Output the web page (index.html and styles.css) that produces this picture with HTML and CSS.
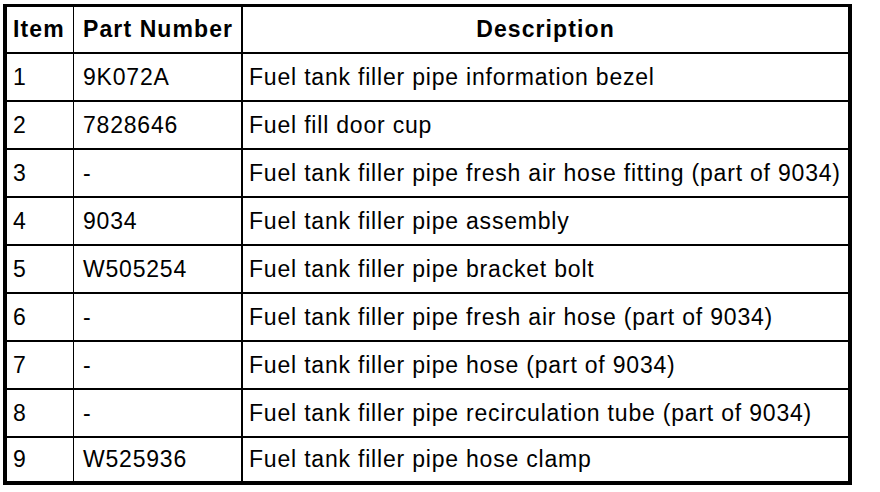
FILE: index.html
```html
<!DOCTYPE html>
<html>
<head>
<meta charset="utf-8">
<link rel="stylesheet" href="styles.css">
</head>
<body>
<table class="parts">
  <colgroup>
    <col class="c-item">
    <col class="c-part">
    <col class="c-desc">
  </colgroup>
  <thead>
    <tr><th class="item">Item</th><th class="part">Part Number</th><th class="desc">Description</th></tr>
  </thead>
  <tbody>
    <tr><td class="item">1</td><td class="part">9K072A</td><td class="desc">Fuel tank filler pipe information bezel</td></tr>
    <tr><td class="item">2</td><td class="part">7828646</td><td class="desc">Fuel fill door cup</td></tr>
    <tr><td class="item">3</td><td class="part">-</td><td class="desc">Fuel tank filler pipe fresh air hose fitting (part of 9034)</td></tr>
    <tr><td class="item">4</td><td class="part">9034</td><td class="desc">Fuel tank filler pipe assembly</td></tr>
    <tr><td class="item">5</td><td class="part">W505254</td><td class="desc">Fuel tank filler pipe bracket bolt</td></tr>
    <tr><td class="item">6</td><td class="part">-</td><td class="desc">Fuel tank filler pipe fresh air hose (part of 9034)</td></tr>
    <tr><td class="item">7</td><td class="part">-</td><td class="desc">Fuel tank filler pipe hose (part of 9034)</td></tr>
    <tr><td class="item">8</td><td class="part">-</td><td class="desc">Fuel tank filler pipe recirculation tube (part of 9034)</td></tr>
    <tr><td class="item">9</td><td class="part">W525936</td><td class="desc">Fuel tank filler pipe hose clamp</td></tr>
  </tbody>
</table>
</body>
</html>
```
FILE: styles.css
```css
html, body {
  margin: 0;
  padding: 0;
  background: #fff;
}
body {
  padding: 4px 0 0 3px;
  font-family: "Liberation Sans", Arial, sans-serif;
  font-size: 23px;
  color: #000;
}
.parts {
  border-collapse: separate;
  border-spacing: 0;
  table-layout: fixed;
  width: 849px;
  border: 4px solid #000;
  border-top-width: 3px;
}
.c-item { width: 67px; }
.c-part { width: 169px; }
.c-desc { width: 605px; }
.parts th,
.parts td {
  height: 48px;
  padding: 0 0 0 6px;
  border: 0 solid #000;
  border-bottom-width: 2px;
  border-right-width: 2px;
  text-align: left;
  vertical-align: middle;
  white-space: nowrap;
  letter-spacing: 0.8px;
  box-sizing: border-box;
}
.parts th {
  height: 47px;
  font-weight: bold;
  letter-spacing: 1.1px;
}
.parts tbody tr:last-child td {
  border-bottom-width: 0;
  height: 43px;
}
.parts .item {
  border-right-width: 1px;
  padding-left: 6px;
}
.parts .part {
  padding-left: 9px;
}
.parts .desc {
  border-right-width: 0;
  padding-left: 6px;
}
.parts th.desc {
  text-align: center;
  padding-left: 0;
}
```
